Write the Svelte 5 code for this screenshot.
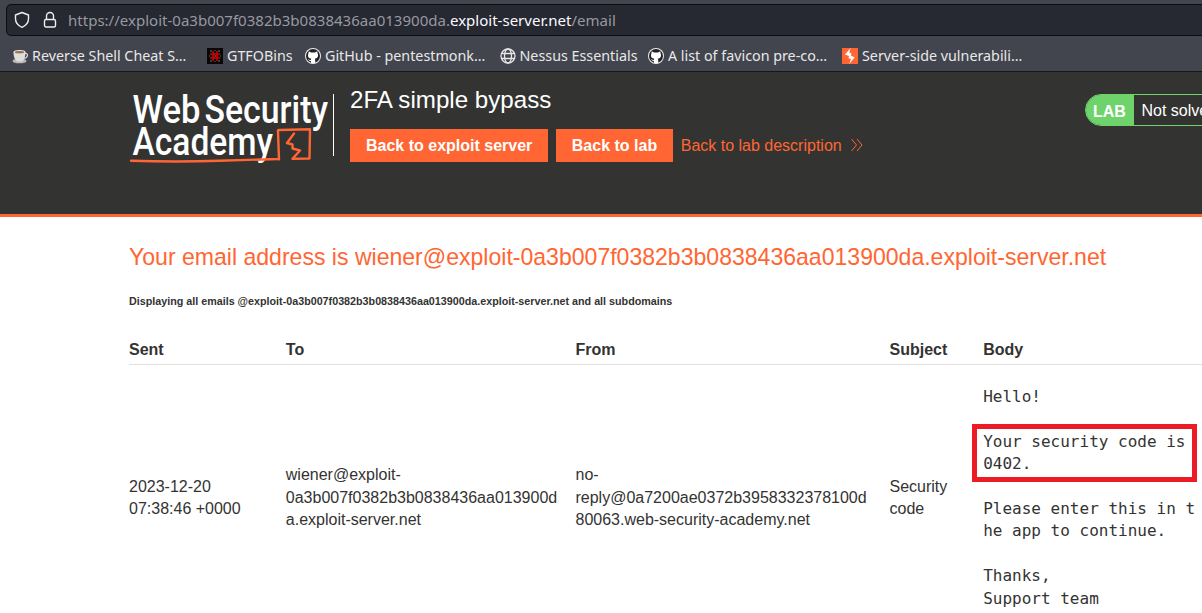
<script>
  const bookmarks = [
    { icon: 'cup', label: 'Reverse Shell Cheat S…', width: 195 },
    { icon: 'hash', label: 'GTFOBins', width: 98 },
    { icon: 'github', label: 'GitHub - pentestmonk…', width: 194.5 },
    { icon: 'globe', label: 'Nessus Essentials', width: 148.5 },
    { icon: 'github', label: 'A list of favicon pre-co…', width: 194 },
    { icon: 'burp', label: 'Server-side vulnerabili…', width: 194 }
  ];
  const columns = ['Sent', 'To', 'From', 'Subject', 'Body'];
</script>

<div class="page">
  <div class="toolbar">
    <div class="urlbar">
      <svg class="shield" width="16" height="18" viewBox="0 0 16 18"><path d="M8 1.5 14.5 4v3.7c0 4-2.6 6.8-6.5 8.6-3.900-1.800-6.500-4.600-6.500-8.600V4z" /></svg>
      <svg class="lock" width="14" height="18" viewBox="0 0 14 18"><path d="M3.500 8V5a3.500 3.500 0 0 1 7 0v3" /><rect x="1.500" y="8.500" width="11" height="7.500" rx="1.500" /></svg>
      <span class="url">https://exploit-0a3b007f0382b3b0838436aa013900da.<b>exploit-server.net</b>/email</span>
    </div>
  </div>
  <div class="bookmarks">
    {#each bookmarks as item}
      <div class="bookmark" style="width: {item.width}px">
        <svg width="16" height="16" viewBox="0 0 16 16">
          {#if item.icon === 'cup'}
            <ellipse cx="7.500" cy="13" rx="7" ry="2.300" fill="#b9b9b9" />
            <path d="M13 5.500c3.500-.8 3.500 4.500-1.500 5" fill="none" stroke="#ddd" stroke-width="1.200" />
            <path d="M1.500 4h12c0 5-1.500 9-4 9.500H6C3 13 1.500 9 1.500 4z" fill="#dededb" />
            <ellipse cx="7.500" cy="4" rx="6" ry="2" fill="#f1f0ed" /><ellipse cx="7.500" cy="4.200" rx="4.800" ry="1.200" fill="#9a714c" />
          {:else if item.icon === 'hash'}
            <rect width="16" height="16" fill="#080808" />
            <path d="M3 2h2v2H3zM7 2h2v1H7zM11 2h2v2h-2zM2 7h1v2H2zM13 7h1v2h-1zM3 12h2v2H3zM7 13h2v1H7zM11 12h2v2h-2z" fill="#3c3c3f" />
            <path d="M6 3v10M10 3v10M3 6h10M3 10h10" stroke="#cf0000" stroke-width="1.600" />
            <path d="M7 7h2v2H7z" fill="#3c3c3f" />
          {:else if item.icon === 'github'}
            <circle cx="8" cy="8" r="8" fill="#eee" /><circle cx="8" cy="8" r="7" fill="#202228" />
            <path d="M3.700 3.200 6 4.400h4l2.300-1.200.3 2.400c1.300 3-.3 4.900-2.900 5.200.5.6.6 1.200.6 4.200H5.900v-2c-1.900.3-2.100-1-2.900-1.700 1.300-.1 1.400 1 2.900.7 0-.600.1-.9.5-1.200-2.600-.4-4.200-2-3-5.200z" fill="#fff" />
          {:else if item.icon === 'globe'}
            <g fill="none" stroke="#e5e5e8" stroke-width="1.300"><circle cx="8" cy="8" r="7" /><ellipse cx="8" cy="8" rx="3.500" ry="7" /><path d="M1.500 5.500h13M1.500 10.500h13" /></g>
          {:else}
            <rect width="16" height="16" fill="#ff6633" /><path d="M8.600 0 3 6.600 7 8 6.500 10.200 9 11 7.200 16 12.700 9.200 9 7.800 9.500 5.400 7.200 4.500z" fill="#fff" />
          {/if}
        </svg>
        <span>{item.label}</span>
      </div>
    {/each}
  </div>

  <header>
    <svg class="logo" width="206" height="76" viewBox="128 91 206 76">
      <g class="brand">
        <text x="132.500" y="122.500" textLength="68" lengthAdjust="spacingAndGlyphs">Web</text>
        <text x="204.500" y="122.500" textLength="123.500" lengthAdjust="spacingAndGlyphs">Security</text>
        <text x="132.500" y="155" textLength="140.500" lengthAdjust="spacingAndGlyphs">Academy</text>
      </g>
      <path d="M131 160.800Q177 162.200 219 160.800T278 159M279 159.500 278 131.500Q277.500 129.500 279.500 130L310 129.300 309.500 158.500 292.500 158.800 300 150.500 292.500 148.500V144.500L287 143 294 133.500" />
    </svg>
    <div class="rule"></div>
    <div class="title">
      <h2>2FA simple bypass</h2>
      <div class="actions">
        <a class="button">Back to exploit server</a>
        <a class="button lab">Back to lab</a>
        <a class="back">Back to lab description
          <svg width="14" height="14" viewBox="0 0 14 14"><path d="m1.500 1 5 6-5 6M7 1l5 6-5 6" /></svg>
        </a>
      </div>
    </div>
    <div class="status"><strong>LAB</strong><span>Not solved</span></div>
  </header>

  <main>
    <h1>Your email address is wiener@exploit-0a3b007f0382b3b0838436aa013900da.exploit-server.net</h1>
    <h6>Displaying all emails @exploit-0a3b007f0382b3b0838436aa013900da.exploit-server.net and all subdomains</h6>
    <div class="grid head">
      {#each columns as column}<div>{column}</div>{/each}
    </div>
    <div class="grid row">
      <div>2023-12-20<br />07:38:46 +0000</div>
      <div>wiener@exploit-<br />0a3b007f0382b3b0838436aa013900d<br />a.exploit-server.net</div>
      <div>no-<br />reply@0a7200ae0372b3958332378100d<br />80063.web-security-academy.net</div>
      <div>Security<br />code</div>
      <div class="message">
        <p>Hello!</p>
        <p class="marked">Your security code is<br />0402.</p>
        <p>Please enter this in t<br />he app to continue.</p>
        <p>Thanks,<br />Support team</p>
      </div>
    </div>
  </main>
</div>

<style>
  :global(body) { overflow: hidden; }
  .page { width: 1202px; height: 613px; overflow: hidden; background: #fff; color: #333332; font: 16px/22.4px "Liberation Sans", Arial, sans-serif; }
  .page * { box-sizing: border-box; }
  .toolbar { height: 40px; padding: 4px 0 4px 6px; background: #42454d; }
  .urlbar { display: flex; align-items: center; width: 1210px; height: 32px; padding-left: 7px; border: 1px solid #0c0d10; border-radius: 5px; background: #262832; }
  .urlbar svg { fill: none; stroke: #eeeeef; stroke-width: 1.4; stroke-linejoin: round; }
  .lock { margin-left: 13px; }
  .url { margin-left: 11px; color: #9899a0; font: 15.04px/24px "Noto Sans", sans-serif; white-space: nowrap; }
  .url b { color: #fbfbfe; font-weight: 400; }
  .bookmarks { display: flex; align-items: flex-start; height: 32px; padding: 8px 0 0 12px; background: #42454d; border-bottom: 1px solid #15161a; color: #e8e8e9; font: 14.3px/16px "Noto Sans", sans-serif; }
  .bookmark { display: flex; flex-shrink: 0; align-items: center; gap: 4px; height: 16px; white-space: nowrap; }
  .bookmark svg { flex-shrink: 0; }
  header { display: flex; height: 145px; padding: 19px 0 0 128px; background: #333332; border-bottom: 3px solid #ff6633; }
  .logo { flex-shrink: 0; overflow: visible; }
  .brand { fill: #fff; font: 500 38px Roboto, sans-serif; }
  .logo path { fill: none; stroke: #ff6633; stroke-width: 2.4; stroke-linejoin: round; stroke-linecap: round; }
  .rule { flex-shrink: 0; width: 1px; height: 62px; margin: 3px 0 0 -1px; background: #fff; }
  .title { flex-shrink: 0; width: 735px; margin-left: 16px; margin-top: -5px; }
  h1, h2, h6, p { margin: 0; font-weight: 400; }
  h2 { color: #fff; font-size: 24.16px; line-height: 28px; }
  .actions { display: flex; align-items: center; gap: 8px; height: 33px; margin-top: 15px; }
  .button { height: 33px; padding: 0 16px; background: #ff6633; color: #fff; font-weight: 700; line-height: 33px; }
  .lab { width: 117px; padding: 0 0 0 15.500px; white-space: nowrap; }
  .back { display: flex; align-items: center; gap: 8px; margin: 1px 0 0 -0.600px; color: #ff6633; }
  .back svg { margin-top: -2px; fill: none; stroke: #ff6633; stroke-width: 1; }
  .status { display: flex; flex-shrink: 0; width: 140px; height: 32px; margin-top: 3px; border: 1px solid #6fd36c; border-radius: 16px; overflow: hidden; color: #fff; line-height: 31px; }
  .status strong { width: 48px; padding: 1px 0 0 7px; background: #6fd36c; }
  .status span { padding-left: 7.500px; white-space: nowrap; }
  main { padding: 25px 0 0 129px; }
  h1 { color: #ff6633; font-size: 23.06px; line-height: 30px; white-space: nowrap; }
  h6 { margin-top: 21px; font-size: 10.74px; font-weight: 700; line-height: 16px; }
  .grid { display: grid; grid-template-columns: 156.8px 289.7px 314px 93.7px 260px; align-items: center; }
  .head { height: 30px; margin-top: 26px; padding-top: 2px; border-bottom: 1px solid #e1e1e1; font-weight: 700; }
  .row { height: 266px; }
  .message { display: grid; gap: 22.4px; font-family: "DejaVu Sans Mono", monospace; white-space: nowrap; }
  .marked { position: relative; }
  .marked::after { content: ""; position: absolute; box-sizing: border-box; left: -11px; top: -7px; width: 225px; height: 58px; border: 5px solid #ed1c24; }
</style>
